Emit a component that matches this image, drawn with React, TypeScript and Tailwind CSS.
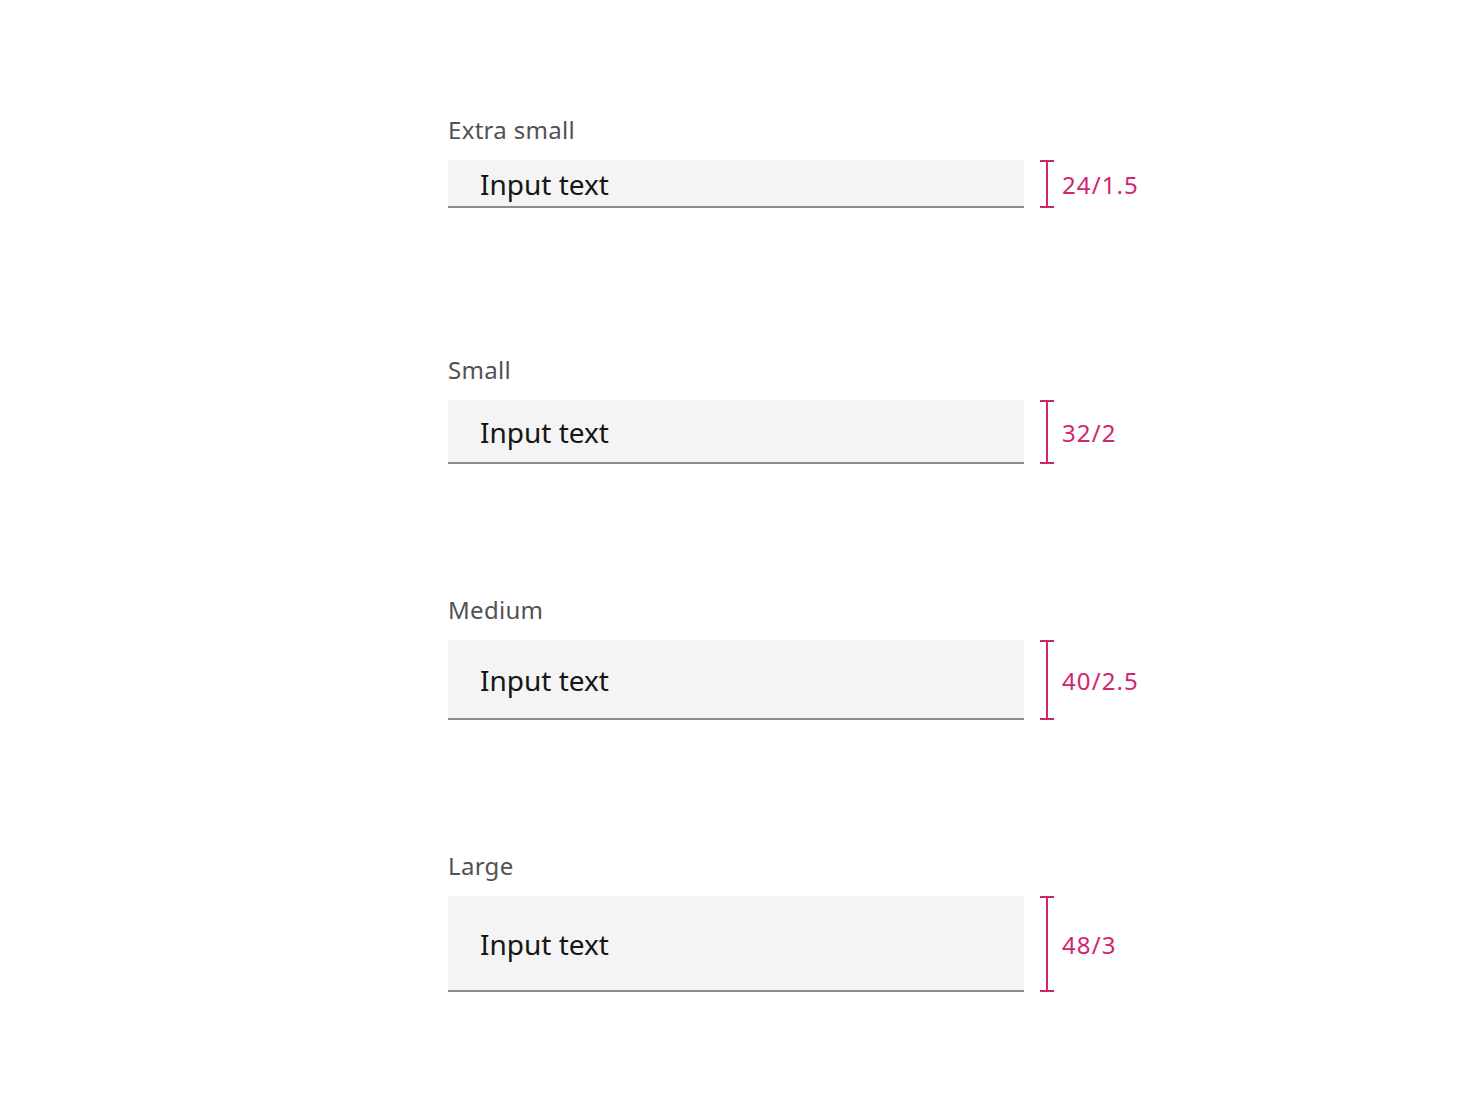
import React from 'react';

type Size = { label: string; height: string; spec: string; gap: string };

const sizes: Size[] = [
    { label: 'Extra small', height: 'h-[48px]', spec: '24/1.5', gap: 'mt-0' },
    { label: 'Small', height: 'h-[64px]', spec: '32/2', gap: 'mt-[144px]' },
    { label: 'Medium', height: 'h-[80px]', spec: '40/2.5', gap: 'mt-[128px]' },
    { label: 'Large', height: 'h-[96px]', spec: '48/3', gap: 'mt-[128px]' },
];

// I-beam marker spanning the full field height
function Bracket() {
    return (
        <div className="ml-[16px] flex flex-col items-center w-[14px]">
            <div className="h-[2px] w-[14px] bg-[#d02670]" />
            <div className="flex-1 w-[2px] bg-[#d02670]" />
            <div className="h-[2px] w-[14px] bg-[#d02670]" />
        </div>
    );
}

function SizeRow({ size }: { size: Size }) {
    return (
        <div className={size.gap}>
            <div className="text-[24px] leading-[32px] tracking-[0.3px] text-[#525252] pt-[2px] mb-[14px]">{size.label}</div>
            <div className="flex items-stretch">
                <div className={`${size.height} w-[576px] bg-[#f4f4f4] border-b-2 border-[#8d8d8d] flex items-center pl-[32px]`}>
                    <span className="text-[28px] leading-[36px] pt-[2px] text-[#161616]">Input text</span>
                </div>
                <Bracket />
                <div className="ml-[8px] pt-[2px] flex items-center text-[24px] tracking-[1.1px] text-[#d02670]">{size.spec}</div>
            </div>
        </div>
    );
}

export default function App() {
    return (
        <div className="min-h-[1104px] w-full bg-white pt-[112px] pl-[448px]" style={{ fontFamily: '"Noto Sans", Inter, sans-serif' }}>
            {sizes.map((s) => (
                <SizeRow key={s.label} size={s} />
            ))}
        </div>
    );
}
